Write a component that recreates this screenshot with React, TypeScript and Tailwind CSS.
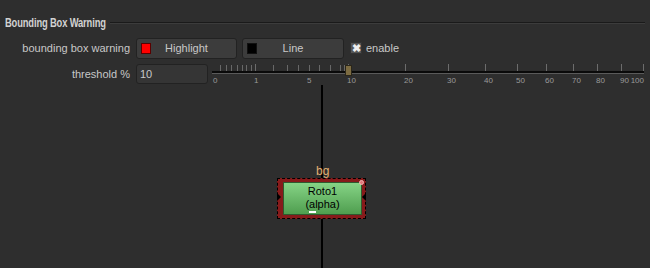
const minorTicks = [220, 226, 231, 237, 242, 246, 251, 273, 287, 298, 309, 319, 330, 340, 344];
const majorTicks = [1, 10, 20, 30, 40, 50, 60, 70, 80, 90, 100];
const labels = [0, 1, 5, 10, 20, 30, 40, 50, 60, 70, 80, 90, 100];
const pos = (v: number) => 2 + 43.1 * Math.sqrt(v);

const Slider = () => {
    return (
        <svg width="436" height="24" viewBox="0 0 436 24" className="block">
            {minorTicks.map((x) => (
                <rect key={x} x={x - 210} y="4" width="1" height="6" fill="#686868" />
            ))}
            {majorTicks.map((t) => (
                <rect key={t} x={Math.round(pos(t))} y="3" width="1" height="7" fill="#6c6c6c" />
            ))}
            <rect x="2" y="10" width="432" height="2" fill="#0a0a0a" />
            <rect x="2" y="12" width="432" height="1" fill="#5a5a5a" />
            {labels.map((l) => (
                <text
                    key={l}
                    x={l === 0 ? 3 : l === 100 ? 434 : Math.round(pos(l)) - 1}
                    y="22"
                    fontSize="8"
                    fill="#9a9a9a"
                    textAnchor={l === 100 ? "end" : "start"}
                    fontFamily="Liberation Sans, sans-serif"
                >
                    {l}
                </text>
            ))}
            <rect x="135.5" y="4.5" width="6" height="10" fill="#7d6c42" stroke="#2a261a" />
        </svg>
    );
};

const Node = () => {
    return (
        <div className="absolute left-[277px] top-[93px] w-[89px] h-[41px] border border-dashed border-black bg-[#861b1b] pl-[5px] pr-[3px] pt-[3px] pb-[3px]">
            <div className="relative h-full border border-[#2f5a2f] bg-gradient-to-b from-[#86d486] to-[#4f9e4f] flex flex-col items-center justify-center text-[11px] leading-[13px] text-black">
                <span>Roto1</span>
                <span>(alpha)</span>
                <div className="absolute left-[25px] bottom-[1px] w-[7px] h-[2px] bg-white" />
                <div className="absolute right-[-3px] top-[-3px] w-[5px] h-[5px] rounded-full bg-[#e27a7a] border border-[#f4b4b4]" />
            </div>
            <div className="absolute left-[-1px] top-[14px] w-0 h-0 border-y-[4px] border-y-transparent border-l-[4px] border-l-black" />
            <div className="absolute right-[-1px] top-[14px] w-0 h-0 border-y-[4px] border-y-transparent border-r-[4px] border-r-black" />
        </div>
    );
};

const App = () => {
    return (
        <div className="w-[650px] h-[268px] bg-[#2e2e2e] text-[#c8c8c8] font-['Liberation_Sans',sans-serif] text-[11px] flex flex-col overflow-hidden">
            <div className="flex items-center gap-[5px] pl-[5px] pr-[5px] pt-[14px]">
                <div className="w-[100px] shrink-0 whitespace-nowrap">
                    <span className="inline-block origin-left scale-x-[0.75] font-bold text-[12.5px] tracking-[-0.2px] text-[#d2d2d2]">
                        Bounding Box Warning
                    </span>
                </div>
                <div className="flex-1 border-t border-[#1a1a1a] border-b border-b-[#3c3c3c]" />
            </div>

            <div className="flex items-center mt-[5px] h-[21px]">
                <div className="w-[130px] text-right">bounding box warning</div>
                <button className="ml-[6px] w-[101px] h-[21px] rounded-[3px] bg-[#3c3c3c] border border-[#222] flex items-center pl-[4px]">
                    <span className="w-[10px] h-[11px] bg-[#f00] border border-[#5a0000]" />
                    <span className="flex-1 text-center pr-[14px]">Highlight</span>
                </button>
                <button className="ml-[5px] w-[102px] h-[21px] rounded-[3px] bg-[#3c3c3c] border border-[#222] flex items-center pl-[4px]">
                    <span className="w-[10px] h-[11px] bg-black border border-[#111]" />
                    <span className="flex-1 text-center pr-[14px]">Line</span>
                </button>
                <span className="ml-[6px] w-[12px] h-[12px] bg-[#555] border border-[#333] flex items-center justify-center text-[11px] font-bold text-[#eee] leading-none">
                    ✖
                </span>
                <span className="ml-[4px]">enable</span>
            </div>

            <div className="flex items-center mt-[5px] h-[21px]">
                <div className="w-[130px] text-right">threshold %</div>
                <div className="ml-[6px] w-[72px] h-[20px] rounded-[3px] bg-[#353535] border border-[#222] flex items-center pl-[3px]">
                    10
                </div>
                <div className="ml-[2px] -mt-[2px]">
                    <Slider />
                </div>
            </div>

            <div className="relative flex-1">
                <div className="absolute left-[321px] top-0 bottom-0 w-[2px] bg-black" />
                <div className="absolute left-[316px] top-[77px] text-[12px] text-[#e2b072]">bg</div>
                <Node />
            </div>
        </div>
    );
};

export default App;
